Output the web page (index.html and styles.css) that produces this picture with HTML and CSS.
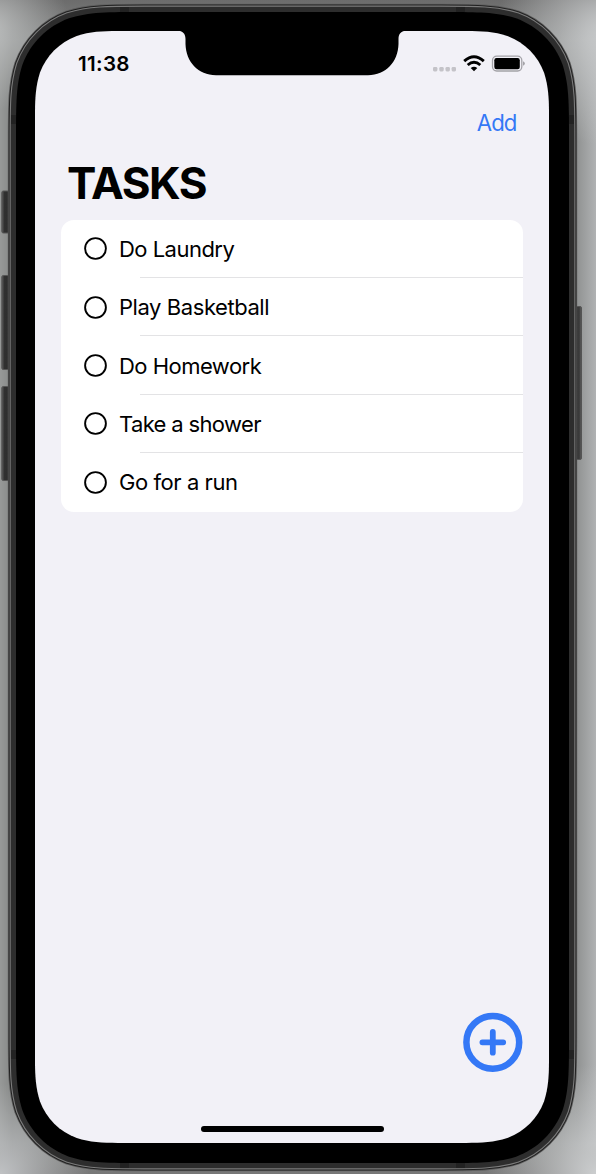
FILE: index.html
```html
<!DOCTYPE html>
<html lang="en">
<head>
<meta charset="utf-8">
<title>Tasks</title>
<link rel="stylesheet" href="styles.css">
</head>
<body>
<div class="stage">
  <svg class="device" viewBox="0 0 596 1174" aria-hidden="true">
    <defs>
      <linearGradient id="btnL" x1="0" x2="1"><stop offset="0" stop-color="#5a5a5a"/><stop offset=".3" stop-color="#303030"/><stop offset="1" stop-color="#2b2b2b"/></linearGradient>
      <linearGradient id="btnR" x1="0" x2="1"><stop offset="0" stop-color="#444"/><stop offset=".35" stop-color="#303030"/><stop offset=".75" stop-color="#404040"/><stop offset="1" stop-color="#666"/></linearGradient>
      <path id="shell" d="M144.4 12C107.4 12 88.9 12 69 18.3C47.3 26.2 30.2 43.3 22.3 65C16 84.9 16 103.4 16 140.4V1034.6C16 1071.6 16 1090.1 22.3 1110C30.2 1131.7 47.3 1148.8 69 1156.7C88.9 1163 107.4 1163 144.4 1163H440.6C477.6 1163 496.1 1163 516 1156.7C537.7 1148.8 554.8 1131.7 562.7 1110C569 1090.1 569 1071.6 569 1034.6V140.4C569 103.4 569 84.9 562.7 65C554.8 43.3 537.7 26.2 516 18.3C496.1 12 477.6 12 440.6 12Z"/>
    </defs>
    <g fill="url(#btnL)" stroke="#555" stroke-width="1">
      <rect x="1.8" y="191" width="9" height="42" rx="1.5"/>
      <rect x="1.8" y="275.5" width="9" height="94" rx="1.5"/>
      <rect x="1.8" y="386.5" width="9" height="94" rx="1.5"/>
    </g>
    <rect x="574" y="306.5" width="7.5" height="153" rx="1.5" fill="url(#btnR)" stroke="#555"/>
    <use href="#shell" fill="none" stroke="#5f5f5f" stroke-width="16.4"/>
    <use href="#shell" fill="none" stroke="#202020" stroke-width="14.8"/>
    <use href="#shell" fill="none" stroke="#7b7b7b" stroke-width="12.8"/>
    <use href="#shell" fill="#000" stroke="#2d2d2d" stroke-width="10.6"/>
    <g fill="#222">
      <rect x="120" y="7" width="9" height="5"/><rect x="456" y="7" width="9" height="5"/>
      <rect x="120" y="1163" width="9" height="5"/><rect x="456" y="1163" width="9" height="5"/>
      <rect x="11" y="115" width="5" height="9"/><rect x="569" y="115" width="5" height="9"/>
      <rect x="11" y="1050" width="5" height="9"/><rect x="569" y="1050" width="5" height="9"/>
    </g>
    <use href="#shell" fill="#000"/>
    <path fill="#f2f1f7" d="M118 31C102 31 90 31.700 76.7 35.9C59.6 42.2 46.2 55.6 39.9 72.7C35.700 86 35 98 35 114V1060C35 1076 35.700 1088 39.9 1101.3C46.2 1118.4 59.6 1131.8 76.7 1138.1C90 1142.300 102 1143 118 1143H466C482 1143 494 1142.300 507.3 1138.1C524.4 1131.8 537.8 1118.4 544.1 1101.3C548.300 1088 549 1076 549 1060V114C549 98 548.300 86 544.1 72.7C537.8 55.6 524.4 42.2 507.3 35.9C494 31.700 482 31 466 31Z"/>
    <path d="M177 30.5C183 31 185.4 33.500 185.500 39V44C186 62 198 75 216 75.300H368C386 75 398 62 398.500 44V39C398.600 33.500 401 31 407 30.500Z"/>
  </svg>

  <main class="screen">
    <header class="status">
      <span class="time">11:38</span>
      <svg class="indicators" width="94" height="20" viewBox="432 54 94 20">
        <g fill="#c4c3c8"><rect x="433" y="67" width="4.400" height="4.400" rx="1.300"/><rect x="439.300" y="67" width="4.400" height="4.400" rx="1.300"/><rect x="445.500" y="67" width="4.400" height="4.400" rx="1.300"/><rect x="451.600" y="67" width="4.400" height="4.400" rx="1.300"/></g>
        <path d="M464.200 61.100Q474 52.500 483.800 61.100M467.700 65Q474 59.500 480.300 65" fill="none" stroke="#000" stroke-width="2.900"/>
        <path d="M470.700 68Q474 65.300 477.300 68L474 71.200Z"/>
        <rect x="492.500" y="56.200" width="29.300" height="14.800" rx="4.200" fill="none" stroke="#a3a2a7" stroke-width="1.300"/>
        <rect x="494.300" y="58" width="25.500" height="11.200" rx="2.200"/>
        <path d="M523 61.200Q524.900 62 524.900 63.500T523 65.800Z" fill="#a3a2a7"/>
      </svg>
    </header>
    <nav class="toolbar"><a class="add">Add</a></nav>
    <h1 class="title">TASKS</h1>
    <ul class="list">
      <li class="row"><svg class="check" viewBox="0 0 23 23"><circle cx="11.500" cy="11.500" r="10.400"/></svg><span class="label laundry">Do Laundry</span></li>
      <li class="row"><svg class="check" viewBox="0 0 23 23"><circle cx="11.500" cy="11.500" r="10.400"/></svg><span class="label basketball">Play Basketball</span></li>
      <li class="row"><svg class="check" viewBox="0 0 23 23"><circle cx="11.500" cy="11.500" r="10.400"/></svg><span class="label homework">Do Homework</span></li>
      <li class="row"><svg class="check" viewBox="0 0 23 23"><circle cx="11.500" cy="11.500" r="10.400"/></svg><span class="label shower">Take a shower</span></li>
      <li class="row"><svg class="check" viewBox="0 0 23 23"><circle cx="11.500" cy="11.500" r="10.400"/></svg><span class="label run">Go for a run</span></li>
    </ul>
    <footer class="bottom">
      <svg class="plus" width="60" height="60" viewBox="0 0 60 60" fill="none" stroke="#3478f6">
        <circle cx="29.800" cy="30.300" r="26.400" stroke-width="6.500"/>
        <path d="M29.800 19.900V40.700M19.400 30.300H40.200" stroke-width="5.800" stroke-linecap="round"/>
      </svg>
      <div class="home"></div>
    </footer>
  </main>
</div>
</body>
</html>
```
FILE: styles.css
```css
* { box-sizing: border-box; }
body { margin: 0; font-family: Inter, "Liberation Sans", sans-serif; color: #000; }
.stage {
  position: relative;
  width: 596px;
  height: 1174px;
  overflow: hidden;
  padding: 31px 47px 31px 35px;
  background:
    radial-gradient(circle at 0 1174px, #c0c2c4 0, rgba(150,151,151,0) 90px),
    radial-gradient(circle at 596px 1174px, #cccecf 0, rgba(150,151,151,0) 110px),
    radial-gradient(circle at -10px 30px, #b9bbbb 0, rgba(150,151,151,0) 80px),
    radial-gradient(circle at 606px 35px, #c6c8c9 0, rgba(160,161,161,0) 110px),
    linear-gradient(to bottom, #6c6c6c 0, rgba(108,108,108,0) 40px),
    linear-gradient(to top, #777 0, rgba(120,120,120,0) 30px),
    linear-gradient(to right, #979998 0, #858786 12px, #858786 560px, #929494 578px, #b0b2b3 596px);
}
.device { position: absolute; left: 0; top: 0; width: 596px; height: 1174px; }
.screen { position: relative; display: flex; flex-direction: column; width: 514px; height: 1112px; }
.status { display: flex; justify-content: space-between; align-items: flex-start; height: 65px; padding: 23px 23px 0 43px; }
.time { font-size: 20.6px; line-height: 21px; font-weight: 600; letter-spacing: .3px; margin-top: -1px; }
.toolbar { display: flex; justify-content: flex-end; height: 54px; padding: 13px 32.5px 0 0; }
.add { color: #3478f6; font-size: 22.2px; line-height: 27px; letter-spacing: -.9px; }
.title { margin: 0; padding: 6px 0 0 32px; height: 69.5px; font-size: 44px; line-height: 54px; font-weight: 700; letter-spacing: -1.45px; }
.list { list-style: none; margin: 0 26px; padding: 0; height: 292px; border-radius: 13px; background: #fff; overflow: hidden; display: flex; flex-direction: column; }
.row { flex: 1; display: flex; align-items: center; gap: 12px; padding-left: 23px; background: linear-gradient(#e3e3e5, #e3e3e5) right bottom / 383px 1px no-repeat; }
.row:last-child { background: none; }
.check { width: 23px; height: 23px; fill: none; stroke: #000; stroke-width: 1.9px; overflow: visible; }
.label { font-size: 22px; line-height: 28px; white-space: nowrap; }
.laundry, .homework { letter-spacing: -.52px; }
.basketball, .run { letter-spacing: -.43px; }
.shower { letter-spacing: -.65px; }
.bottom { margin-top: auto; display: flex; flex-direction: column; align-items: center; }
.plus { align-self: flex-end; margin-right: 26px; }
.home { width: 183px; height: 6px; border-radius: 3px; background: #000; margin: 54px 0 11px; }
```
